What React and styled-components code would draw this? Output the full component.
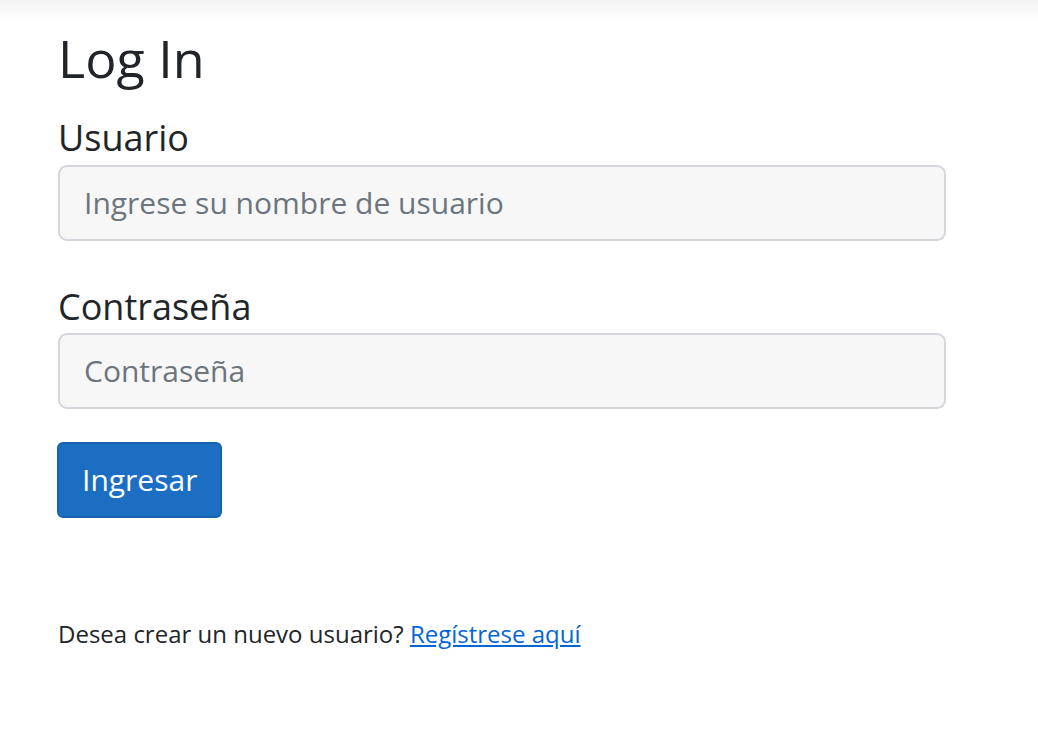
import React from "react";
import styled, { createGlobalStyle } from "styled-components";

const Global = createGlobalStyle`
  html, body { margin: 0; padding: 0; background: #fff; }
  body { font-family: "Open Sans", "Noto Sans", sans-serif; color: #212529; }
`;

const TopShadow = styled.div`
  height: 22px;
  background: linear-gradient(#f3f3f3, #ffffff);
`;

const Container = styled.main`
  padding: 0 58px;
  width: 888px;
`;

const Title = styled.h1`
  margin: 5px 0 21px;
  font-size: 52px;
  font-weight: 400;
  line-height: 1.2;
`;

const Form = styled.form`
  display: flex;
  flex-direction: column;
`;

const Group = styled.div`
  display: flex;
  flex-direction: column;
  margin-bottom: ${(p) => p.$mb || 38}px;
`;

const Label = styled.label`
  font-size: 36px;
  line-height: 1.2;
  margin: 6px 0 5px;
`;

const Input = styled.input`
  box-sizing: border-box;
  height: 76px;
  width: 888px;
  padding: 0 24px;
  font-family: inherit;
  font-size: 30px;
  color: #495057;
  background: #f7f7f8;
  border: 2px solid #d3d6db;
  border-radius: 9px;
  outline: none;
  &::placeholder { color: #6c757d; }
`;

const Button = styled.button`
  align-self: flex-start;
  box-sizing: border-box;
  height: 76px;
  margin-left: -1px;
  padding: 0 23px;
  font-family: inherit;
  font-size: 30px;
  color: #fff;
  background: #1b6ec2;
  border: 2px solid #1861ac;
  border-radius: 6px;
`;

const Footer = styled.p`
  margin: 99px 0 0;
  font-size: 24px;
`;

const Link = styled.a`
  color: #0366d6;
  text-decoration: underline;
`;

export default function App() {
  return (
    <>
      <Global />
      <TopShadow />
      <Container>
        <Title>Log In</Title>
        <Form onSubmit={(e) => e.preventDefault()}>
          <Group>
            <Label>Usuario</Label>
            <Input placeholder="Ingrese su nombre de usuario" />
          </Group>
          <Group $mb={33}>
            <Label>Contraseña</Label>
            <Input type="password" placeholder="Contraseña" />
          </Group>
          <Button type="submit">Ingresar</Button>
        </Form>
        <Footer>
          Desea crear un nuevo usuario? <Link href="#">Regístrese aquí</Link>
        </Footer>
      </Container>
    </>
  );
}
